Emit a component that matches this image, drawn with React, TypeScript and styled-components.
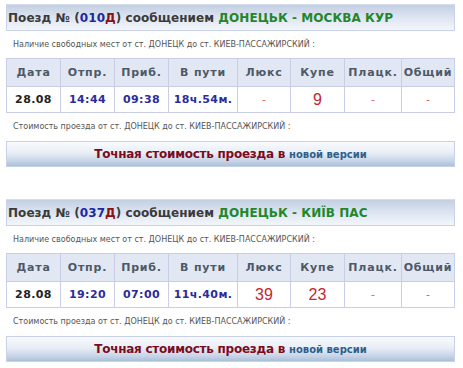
import React from "react";
import styled, { createGlobalStyle } from "styled-components";

const Global = createGlobalStyle`
  html, body { margin: 0; padding: 0; background: #ffffff; }
  body { font-family: "DejaVu Sans", Verdana, sans-serif; }
`;

const Page = styled.div`
  width: 449px;
  padding: 4px 8px 0 6px;
  display: flex;
  flex-direction: column;
  gap: 32px;
`;

const Block = styled.section`
  display: flex;
  flex-direction: column;
`;

const TitleBar = styled.div`
  height: 25px;
  border: 1px solid #c9d1e6;
  border-top-color: #d6deee;
  background: linear-gradient(to bottom, #c3cfe3 0%, #dbe3f0 45%, #f3f6fb 100%);
  display: flex;
  align-items: center;
  padding-left: 1px;
  font-size: 12px;
  font-weight: bold;
  letter-spacing: 0.05px;
  color: #3a3a3a;
  white-space: nowrap;
`;

const Num = styled.span`
  color: #1b27a6;
`;

const Suffix = styled.span`
  color: #8c0f12;
`;

const Route = styled.span`
  color: #24862a;
`;

const Note = styled.div<{ $h: number }>`
  height: ${(p) => p.$h}px;
  line-height: ${(p) => p.$h}px;
  padding-left: 7px;
  font-size: 8px;
  color: #555555;
  white-space: nowrap;
`;

const Table = styled.table`
  width: 448px;
  border-collapse: collapse;
  table-layout: fixed;
`;

const Th = styled.th`
  height: 27px;
  padding: 0;
  background: #e2e8f3;
  border: 1px solid #c9cde6;
  color: #4d5868;
  font-size: 11px;
  font-weight: bold;
  letter-spacing: 0.8px;
  text-align: center;
`;

type Tone = "date" | "time" | "seat" | "none";

const Td = styled.td<{ $tone: Tone }>`
  height: 25px;
  padding: 0;
  border: 1px solid #c9cde6;
  text-align: center;
  font-family: ${(p) =>
    p.$tone === "seat" ? '"Liberation Sans", Arial, sans-serif' : '"DejaVu Sans", Verdana, sans-serif'};
  font-size: ${(p) => (p.$tone === "seat" ? "16px" : "11px")};
  font-weight: ${(p) => (p.$tone === "seat" || p.$tone === "none" ? "normal" : "bold")};
  letter-spacing: ${(p) => (p.$tone === "time" || p.$tone === "date" ? "0.4px" : "0")};
  color: ${(p) =>
    p.$tone === "date"
      ? "#222222"
      : p.$tone === "time"
      ? "#2b2c9c"
      : p.$tone === "seat"
      ? "#c4262e"
      : "#e0585c"};
`;

const PriceBar = styled.div`
  height: 24px;
  border: 1px solid #c9d1e6;
  background: linear-gradient(to bottom, #f8fafd 0%, #e9eef6 45%, #c6d4e6 80%, #aac0da 100%);
  display: flex;
  align-items: center;
  justify-content: center;
  white-space: nowrap;
`;

const PriceText = styled.span`
  font-size: 12px;
  font-weight: bold;
  letter-spacing: -0.25px;
  color: #7c0b1e;
`;

const PriceLink = styled.a`
  font-size: 10px;
  font-weight: bold;
  color: #2e5f8c;
  text-decoration: none;
  margin-left: 4px;
`;

const widths = [54, 54, 54, 69, 53, 54, 57, 53];
const heads = ["Дата", "Отпр.", "Приб.", "В пути", "Люкс", "Купе", "Плацк.", "Общий"];

type Train = {
  num: string;
  suffix: string;
  route: string;
  date: string;
  dep: string;
  arr: string;
  travel: string;
  seats: (string | null)[];
};

const trains: Train[] = [
  {
    num: "010",
    suffix: "Д",
    route: "ДОНЕЦЬК - МОСКВА КУР",
    date: "28.08",
    dep: "14:44",
    arr: "09:38",
    travel: "18ч.54м.",
    seats: [null, "9", null, null],
  },
  {
    num: "037",
    suffix: "Д",
    route: "ДОНЕЦЬК - КИЇВ ПАС",
    date: "28.08",
    dep: "19:20",
    arr: "07:00",
    travel: "11ч.40м.",
    seats: ["39", "23", null, null],
  },
];

function TrainBlock({ t }: { t: Train }) {
  return (
    <Block>
      <TitleBar>
        Поезд № (<Num>{t.num}</Num>
        <Suffix>{t.suffix}</Suffix>) сообщением&nbsp;<Route>{t.route}</Route>
      </TitleBar>
      <Note $h={27}>Наличие свободных мест от ст. ДОНЕЦК до ст. КИЕВ-ПАССАЖИРСКИЙ :</Note>
      <Table>
        <colgroup>
          {widths.map((w, i) => (
            <col key={i} style={{ width: w }} />
          ))}
        </colgroup>
        <thead>
          <tr>
            {heads.map((h) => (
              <Th key={h}>{h}</Th>
            ))}
          </tr>
        </thead>
        <tbody>
          <tr>
            <Td $tone="date">{t.date}</Td>
            <Td $tone="time">{t.dep}</Td>
            <Td $tone="time">{t.arr}</Td>
            <Td $tone="time">{t.travel}</Td>
            {t.seats.map((s, i) => (
              <Td key={i} $tone={s ? "seat" : "none"}>
                {s ?? "-"}
              </Td>
            ))}
          </tr>
        </tbody>
      </Table>
      <Note $h={28}>Стоимость проезда от ст. ДОНЕЦК до ст. КИЕВ-ПАССАЖИРСКИЙ :</Note>
      <PriceBar>
        <PriceText>Точная стоимость проезда в</PriceText>
        <PriceLink href="#">новой версии</PriceLink>
      </PriceBar>
    </Block>
  );
}

export default function App() {
  return (
    <>
      <Global />
      <Page>
        {trains.map((t) => (
          <TrainBlock key={t.num} t={t} />
        ))}
      </Page>
    </>
  );
}
